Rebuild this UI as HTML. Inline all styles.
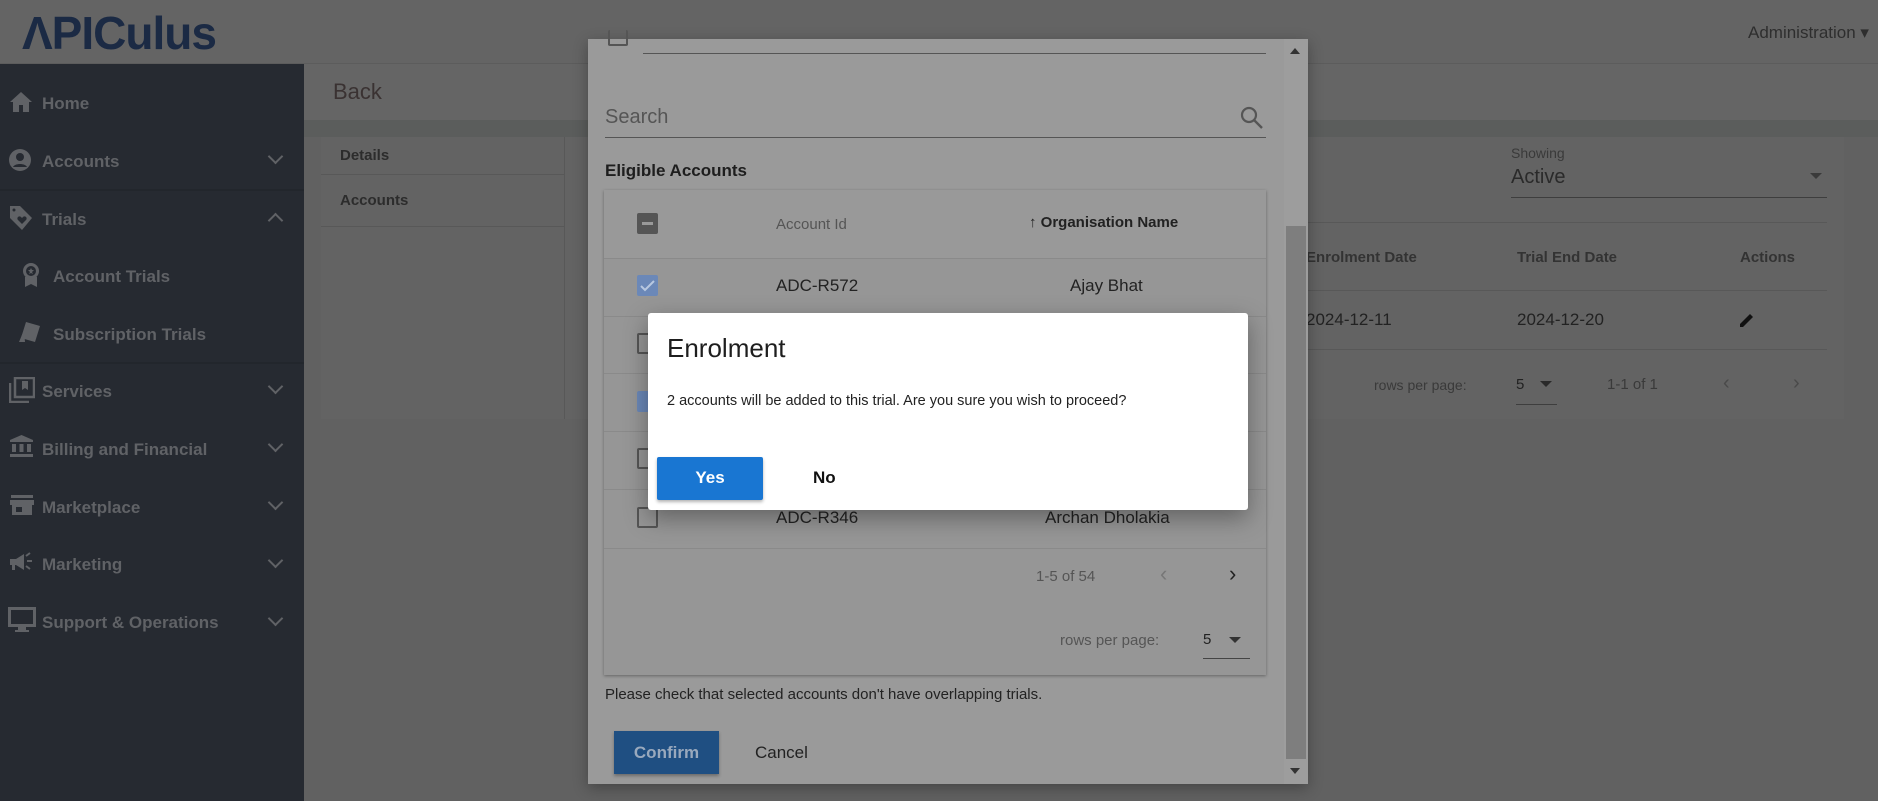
<!DOCTYPE html>
<html><head><meta charset="utf-8">
<style>
*{box-sizing:border-box;margin:0;padding:0}
body{width:1878px;height:801px;overflow:hidden;position:relative;background:#616161;font-family:"Liberation Sans",sans-serif}
.a{position:absolute}
.sb{color:#606266;font-weight:bold;font-size:17px}
.chev{position:absolute;left:270px;width:11px;height:11px;border-right:2px solid #606266;border-bottom:2px solid #606266;transform:rotate(45deg)}
.t{position:absolute;white-space:nowrap}
.cb{position:absolute;left:637px;width:21px;height:21px;border:2px solid #555;border-radius:2px}
.line{position:absolute;height:1px;background:#8a8a8a}
</style></head><body>
<!-- header -->
<div class="a" style="left:0;top:0;width:1878px;height:64px;background:#646464;border-bottom:1px solid #5c5c5c"></div>
<div class="t" style="left:22px;top:6px;font-size:46px;font-weight:bold;color:#1b2a44;letter-spacing:-1px;font-family:'Liberation Sans',sans-serif">ΛPICulus</div>
<div class="t" style="left:1748px;top:23px;font-size:17px;color:#2e2e2e">Administration ▾</div>
<!-- sidebar -->
<div class="a" style="left:0;top:64px;width:304px;height:737px;background:#262a31"></div>
<div class="a" style="left:0;top:189px;width:304px;height:2px;background:#22262c"></div>
<div class="a" style="left:0;top:362px;width:304px;height:2px;background:#22262c"></div>
<svg class="a" style="left:9px;top:91px" width="24" height="22" viewBox="0 0 24 22"><path d="M12 1L1 11h3v10h6v-7h4v7h6V11h3z" fill="#606266"/></svg>
<div class="t sb" style="left:42px;top:94px">Home</div>
<svg class="a" style="left:9px;top:148px" width="22" height="24" viewBox="0 0 22 24"><circle cx="11" cy="12" r="11" fill="#606266"/><circle cx="11" cy="9" r="4" fill="#262a31"/><path d="M4 19c2-4 12-4 14 0" fill="#262a31"/></svg>
<div class="t sb" style="left:42px;top:152px">Accounts</div><div class="chev" style="top:151px"></div>
<svg class="a" style="left:9px;top:205px" width="24" height="26" viewBox="0 0 24 26"><path d="M1 1h10l12 12-10 12L1 13z" fill="#606266"/><circle cx="5" cy="5" r="1.5" fill="#262a31"/><path d="M13 19l-4-4a2 2 0 013-3l1 1 1-1a2 2 0 013 3z" fill="#262a31"/></svg>
<div class="t sb" style="left:42px;top:210px">Trials</div><div class="chev" style="top:215px;transform:rotate(-135deg)"></div>
<svg class="a" style="left:22px;top:262px" width="18" height="26" viewBox="0 0 18 26"><circle cx="9" cy="9" r="8" fill="#606266"/><circle cx="9" cy="9" r="5" fill="#262a31"/><path d="M9 6l1 2h2l-2 2 1 2-2-1-2 1 1-2-2-2h2z" fill="#606266"/><path d="M3 15v10l6-3 6 3V15z" fill="#606266"/></svg>
<div class="t sb" style="left:53px;top:267px">Account Trials</div>
<svg class="a" style="left:18px;top:320px" width="24" height="24" viewBox="0 0 24 24"><path d="M8 2l14 4-5 16-14-4z" fill="#606266"/><path d="M1 22l5-12 1 12z" fill="#606266"/></svg>
<div class="t sb" style="left:53px;top:325px">Subscription Trials</div>
<svg class="a" style="left:9px;top:377px" width="26" height="26" viewBox="0 0 26 26"><path d="M1 6v19h19" stroke="#606266" stroke-width="2.5" fill="none"/><rect x="6" y="1" width="19" height="19" fill="none" stroke="#606266" stroke-width="2.5"/><path d="M13 4h6v9l-3-2-3 2z" fill="#606266"/></svg>
<div class="t sb" style="left:42px;top:382px">Services</div><div class="chev" style="top:381px"></div>
<svg class="a" style="left:9px;top:434px" width="25" height="25" viewBox="0 0 25 25"><path d="M12.5 1L1 6v2h23V6z" fill="#606266"/><rect x="3" y="10" width="4" height="8" fill="#606266"/><rect x="10.5" y="10" width="4" height="8" fill="#606266"/><rect x="18" y="10" width="4" height="8" fill="#606266"/><rect x="1" y="20" width="23" height="3" fill="#606266"/></svg>
<div class="t sb" style="left:42px;top:440px">Billing and Financial</div><div class="chev" style="top:439px"></div>
<svg class="a" style="left:10px;top:494px" width="24" height="22" viewBox="0 0 24 22"><rect x="1" y="1" width="22" height="3" fill="#606266"/><path d="M0 6h24v5H0z" fill="#606266"/><path d="M2 11h20v10H2z" fill="#606266"/><rect x="6" y="13" width="6" height="5" fill="#262a31"/></svg>
<div class="t sb" style="left:42px;top:498px">Marketplace</div><div class="chev" style="top:497px"></div>
<svg class="a" style="left:9px;top:552px" width="25" height="22" viewBox="0 0 25 22"><path d="M1 7h6l8-5v16l-8-5H6v5H3v-5H1z" fill="#606266"/><path d="M18 9h5M17 4l4-3M17 14l4 3" stroke="#606266" stroke-width="2"/></svg>
<div class="t sb" style="left:42px;top:555px">Marketing</div><div class="chev" style="top:555px"></div>
<svg class="a" style="left:8px;top:607px" width="28" height="26" viewBox="0 0 28 26"><rect x="1.5" y="1.5" width="25" height="17" fill="none" stroke="#606266" stroke-width="3"/><rect x="10" y="20" width="8" height="3" fill="#606266"/><rect x="7" y="23" width="14" height="2" fill="#606266"/></svg>
<div class="t sb" style="left:42px;top:613px">Support &amp; Operations</div><div class="chev" style="top:613px"></div>
<!-- main -->
<div class="a" style="left:304px;top:64px;width:1574px;height:56px;background:#656565"></div>
<div class="t" style="left:333px;top:79px;font-size:22px;color:#3a3232">Back</div>
<div class="a" style="left:304px;top:120px;width:1574px;height:17px;background:#5b5d5c"></div>
<div class="a" style="left:321px;top:137px;width:1523px;height:282px;background:#636363"></div>
<div class="a" style="left:564px;top:137px;width:1px;height:282px;background:#585858"></div>
<div class="a" style="left:321px;top:174px;width:243px;height:1px;background:#585858"></div>
<div class="a" style="left:321px;top:226px;width:243px;height:1px;background:#585858"></div>
<div class="t" style="left:340px;top:147px;font-size:15px;color:#2c2c2c;font-weight:bold">Details</div>
<div class="t" style="left:340px;top:192px;font-size:15px;color:#2c2c2c;font-weight:bold">Accounts</div>
<div class="t" style="left:1511px;top:145px;font-size:14px;color:#3a3a3a">Showing</div>
<div class="t" style="left:1511px;top:166px;font-size:20px;color:#2a2a2a">Active</div>
<div class="a" style="left:1810px;top:173px;border:6px solid transparent;border-top:6px solid #3a3a3a"></div>
<div class="a" style="left:1511px;top:197px;width:316px;height:1px;background:#3e3e3e"></div>
<div class="a" style="left:1308px;top:222px;width:519px;height:1px;background:#585858"></div>
<div class="a" style="left:1308px;top:290px;width:519px;height:1px;background:#585858"></div>
<div class="a" style="left:1308px;top:349px;width:519px;height:1px;background:#585858"></div>
<div class="t" style="left:1306px;top:249px;font-size:15px;color:#333;font-weight:bold">Enrolment Date</div>
<div class="t" style="left:1517px;top:249px;font-size:15px;color:#333;font-weight:bold">Trial End Date</div>
<div class="t" style="left:1740px;top:249px;font-size:15px;color:#333;font-weight:bold">Actions</div>
<div class="t" style="left:1306px;top:310px;font-size:17px;color:#222">2024-12-11</div>
<div class="t" style="left:1517px;top:310px;font-size:17px;color:#222">2024-12-20</div>
<svg class="a" style="left:1739px;top:312px" width="16" height="16" viewBox="0 0 16 16"><path d="M1 15v-3L11 2l3 3L4 15z" fill="#111"/></svg>
<div class="t" style="left:1374px;top:377px;font-size:14px;color:#3a3a3a">rows per page:</div>
<div class="t" style="left:1516px;top:376px;font-size:15px;color:#222">5</div>
<div class="a" style="left:1540px;top:381px;border:6px solid transparent;border-top:6px solid #2a2a2a"></div>
<div class="a" style="left:1516px;top:404px;width:41px;height:1px;background:#3e3e3e"></div>
<div class="t" style="left:1607px;top:376px;font-size:15px;color:#3a3a3a">1-1 of 1</div>
<div class="t" style="left:1723px;top:372px;font-size:20px;color:#4a4a4a">‹</div>
<div class="t" style="left:1793px;top:372px;font-size:20px;color:#4a4a4a">›</div>
<!-- modal -->
<div class="a" style="left:588px;top:39px;width:720px;height:745px;background:#9a9a9a;box-shadow:0 4px 14px rgba(0,0,0,.3)"></div>
<div class="a" style="left:1284px;top:39px;width:24px;height:745px;background:#9d9d9d"></div>
<div class="a" style="left:1286px;top:226px;width:20px;height:533px;background:#7e7e7e"></div>
<div class="a" style="left:1290px;top:48px;border:5px solid transparent;border-bottom:6px solid #333;border-top:0"></div>
<div class="a" style="left:1290px;top:768px;border:5px solid transparent;border-top:6px solid #333;border-bottom:0"></div>
<div class="a" style="left:608px;top:30px;width:20px;height:16px;border:2px solid #555;border-radius:2px;border-top:0"></div>
<div class="a" style="left:643px;top:53px;width:623px;height:1px;background:#555"></div>
<div class="t" style="left:605px;top:106px;font-size:20px;color:#555">Search</div>
<svg class="a" style="left:1240px;top:106px" width="24" height="24" viewBox="0 0 24 24"><circle cx="9" cy="9" r="7" fill="none" stroke="#555" stroke-width="2.2"/><path d="M14 14l8 8" stroke="#555" stroke-width="2.4"/></svg>
<div class="a" style="left:605px;top:137px;width:661px;height:1px;background:#555"></div>
<div class="t" style="left:605px;top:161px;font-size:17px;color:#1e1e1e;font-weight:bold">Eligible Accounts</div>
<div class="a" style="left:604px;top:190px;width:662px;height:485px;background:#969696;box-shadow:0 1px 3px rgba(0,0,0,.35)"></div>
<div class="a" style="left:604px;top:190px;width:662px;height:68px;background:#999"></div>
<div class="line" style="left:604px;top:258px;width:662px"></div>
<div class="line" style="left:604px;top:316px;width:662px"></div>
<div class="line" style="left:604px;top:373px;width:662px"></div>
<div class="line" style="left:604px;top:431px;width:662px"></div>
<div class="line" style="left:604px;top:489px;width:662px"></div>
<div class="line" style="left:604px;top:548px;width:662px"></div>
<div class="a" style="left:637px;top:213px;width:21px;height:21px;background:#555;border-radius:2px"><div class="a" style="left:5px;top:9px;width:11px;height:3px;background:#999"></div></div>
<div class="t" style="left:776px;top:216px;font-size:15px;color:#555">Account Id</div>
<div class="t" style="left:1029px;top:214px;font-size:15px;color:#222;font-weight:bold">↑ Organisation Name</div>
<div class="a" style="left:637px;top:275px;width:21px;height:21px;background:#6b88b8;border-radius:2px"><svg width="21" height="21"><path d="M4 11l4 4 9-9" stroke="#b8c8e0" stroke-width="2" fill="none"/></svg></div>
<div class="t" style="left:776px;top:276px;font-size:17px;color:#222">ADC-R572</div>
<div class="t" style="left:1070px;top:276px;font-size:17px;color:#222">Ajay Bhat</div>
<div class="cb" style="top:333px"></div>
<div class="a" style="left:637px;top:391px;width:21px;height:21px;background:#6b88b8;border-radius:2px"></div>
<div class="cb" style="top:448px"></div>
<div class="cb" style="top:507px"></div>
<div class="t" style="left:776px;top:508px;font-size:17px;color:#222">ADC-R346</div>
<div class="t" style="left:1045px;top:508px;font-size:17px;color:#222">Archan Dholakia</div>
<div class="t" style="left:1036px;top:568px;font-size:15px;color:#555">1-5 of 54</div>
<div class="t" style="left:1160px;top:561px;font-size:22px;color:#777">‹</div>
<div class="t" style="left:1229px;top:561px;font-size:22px;color:#222">›</div>
<div class="t" style="left:1060px;top:632px;font-size:15px;color:#555">rows per page:</div>
<div class="t" style="left:1203px;top:631px;font-size:15px;color:#222">5</div>
<div class="a" style="left:1229px;top:637px;border:6px solid transparent;border-top:6px solid #333"></div>
<div class="a" style="left:1203px;top:658px;width:47px;height:1px;background:#444"></div>
<div class="t" style="left:605px;top:686px;font-size:15px;color:#222">Please check that selected accounts don't have overlapping trials.</div>
<div class="a" style="left:614px;top:731px;width:105px;height:43px;background:#1f4f82;box-shadow:0 2px 3px rgba(0,0,0,.3)"></div>
<div class="t" style="left:614px;top:743px;width:105px;text-align:center;font-size:17px;color:#99a9bd;font-weight:bold">Confirm</div>
<div class="t" style="left:755px;top:743px;font-size:17px;color:#222">Cancel</div>
<!-- dialog -->
<div class="a" style="left:648px;top:313px;width:600px;height:197px;background:#fff;border-radius:3px;box-shadow:0 8px 24px rgba(0,0,0,.35)"></div>
<div class="t" style="left:667px;top:333px;font-size:26px;color:#1e1e1e">Enrolment</div>
<div class="t" style="left:667px;top:393px;font-size:14.5px;color:#222">2 accounts will be added to this trial. Are you sure you wish to proceed?</div>
<div class="a" style="left:657px;top:457px;width:106px;height:43px;background:#1976d2;border-radius:2px;box-shadow:0 2px 3px rgba(0,0,0,.3)"></div>
<div class="t" style="left:657px;top:468px;width:106px;text-align:center;font-size:17px;color:#fff;font-weight:bold">Yes</div>
<div class="t" style="left:813px;top:468px;font-size:17px;color:#111;font-weight:bold">No</div>
</body></html>
